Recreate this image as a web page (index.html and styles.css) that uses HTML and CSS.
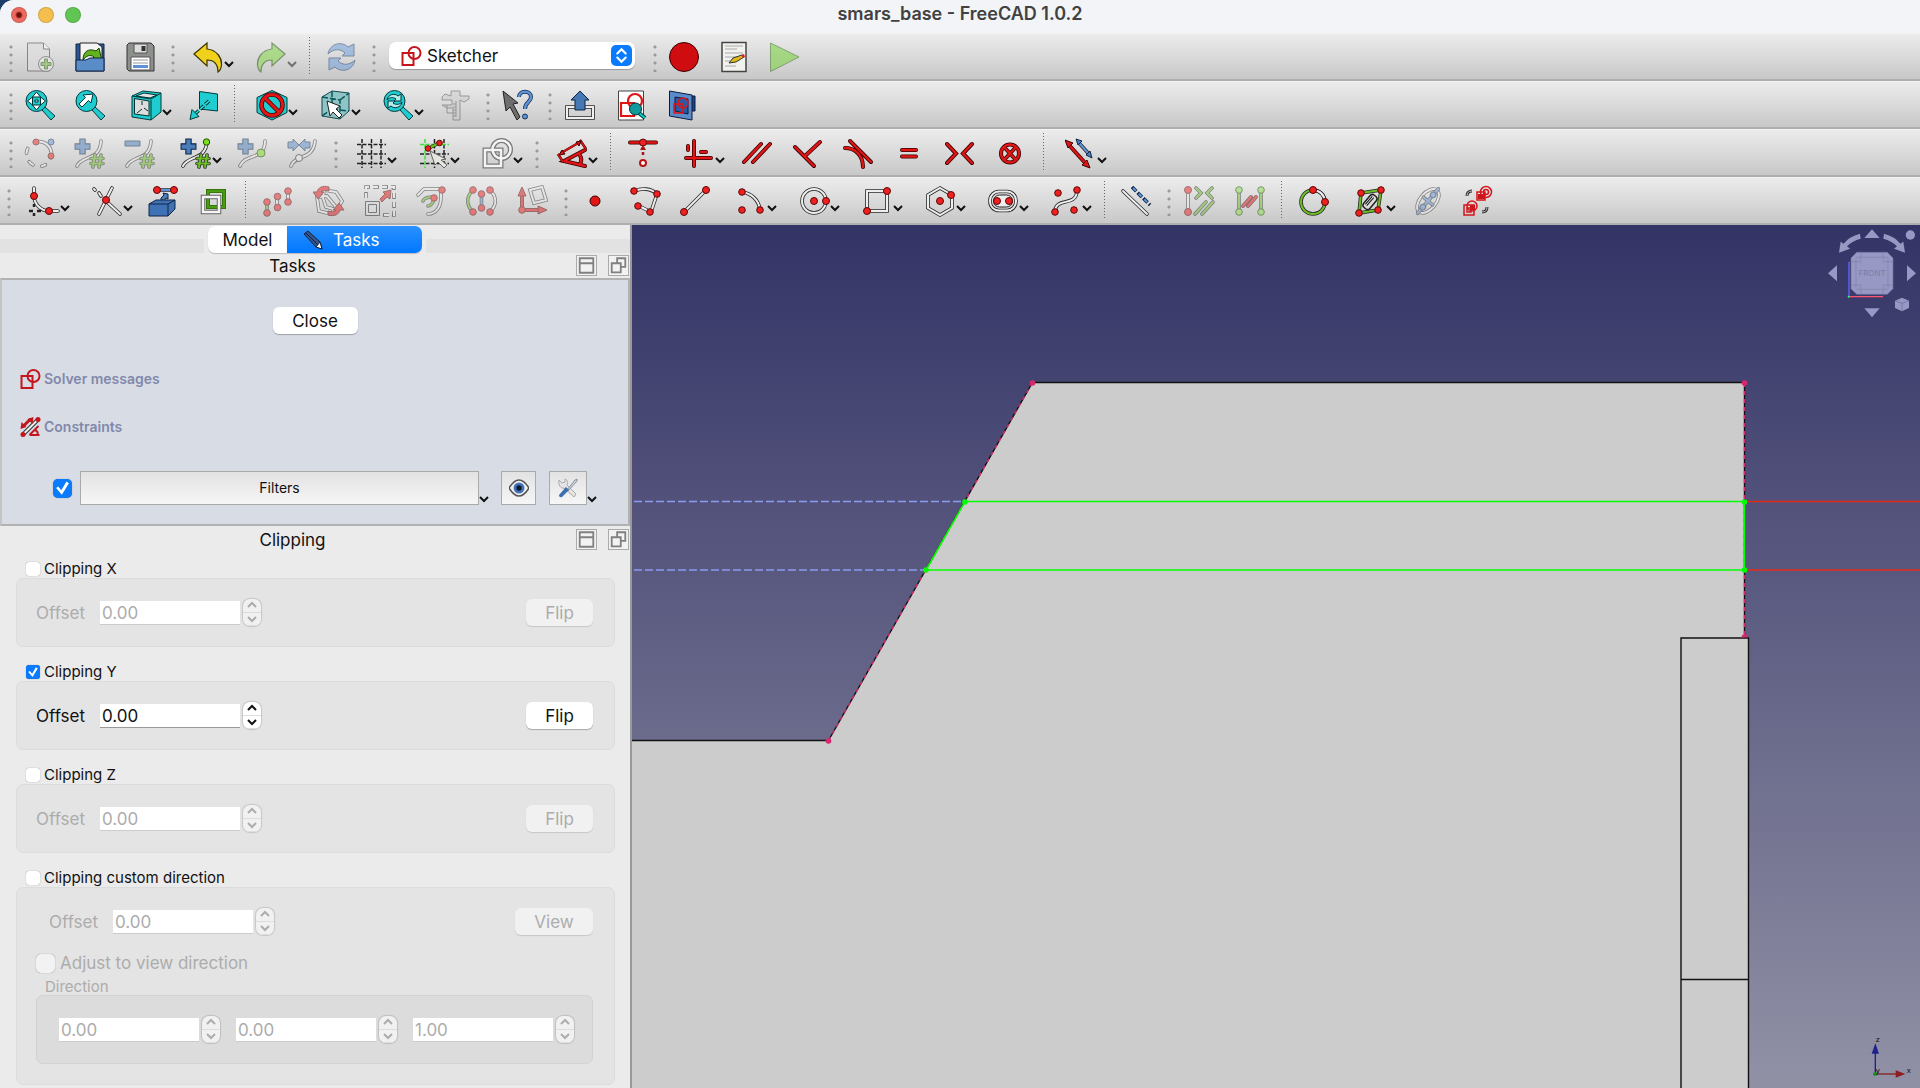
FILE: index.html
```html
<!DOCTYPE html>
<html lang="en">
<head>
<meta charset="utf-8">
<title>smars_base - FreeCAD 1.0.2</title>
<link rel="stylesheet" href="styles.css">
</head>
<body>
<svg class="sprite" aria-hidden="true">
  <symbol id="chev" viewBox="0 0 10 8"><path d="M1 2l4 4 4-4" fill="none" stroke="currentColor" stroke-width="2"/></symbol>
  <symbol id="up" viewBox="0 0 10 8"><path d="M1 6l4-4 4 4" fill="none" stroke="currentColor" stroke-width="2"/></symbol>
  <symbol id="shade" viewBox="0 0 21 21"><path d="M3 2.500h15v16H3zM3 8h15" fill="none" stroke="#808080" stroke-width="2"/></symbol>
  <symbol id="float" viewBox="0 0 21 21"><path d="M9 8V2.500h9V12h-5M3 8h10v10H3z" fill="none" stroke="#808080" stroke-width="2"/></symbol>
  <symbol id="sketch" viewBox="0 0 20 20"><path d="M1 7h11v12H1z" fill="none" stroke="#c4161c" stroke-width="2"/><circle cx="13" cy="7" r="6" fill="none" stroke="#c4161c" stroke-width="2"/></symbol>
  <symbol id="hash" viewBox="0 0 16 16"><path class="e" d="M6 2L4 14M12 2l-2 12M2 5.500h12M2 10.500h12"/><path class="g" d="M6 2L4 14M12 2l-2 12M2 5.500h12M2 10.500h12"/></symbol>
  <symbol id="plus" viewBox="0 0 16 16"><path d="M5.500 1h5v4.500H15v5h-4.500V15h-5v-4.500H1v-5h4.500z" fill="#4a7ebb" stroke="#0f2444"/></symbol>
  <linearGradient id="sky" x2="0" y2="1"><stop offset="0" stop-color="#333366"/><stop offset="1" stop-color="#9191a6"/></linearGradient>
</svg>

<div class="window">
<header class="titlebar">
  <div class="lights"><button class="light close" aria-label="Close window"></button><button class="light min" aria-label="Minimize"></button><button class="light zoom" aria-label="Zoom"></button></div>
  <h1>smars_base - FreeCAD 1.0.2</h1>
</header>

<div class="toolbar roomy">
  <i class="handle"></i>
  <button class="tool off" aria-label="New"><svg viewBox="0 0 32 32"><path d="M3.500 2h16l6 6v22h-22z" fill="#ddd" stroke="#333"/><path d="M19.500 2v6h6" fill="#fff" stroke="#333"/><circle cx="22" cy="23" r="7.500" fill="#eee" stroke="#444"/><path d="M20.500 18h3v3.500H27v3h-3.500V28h-3v-3.500H17v-3h3.500z" fill="#73b63a" stroke="#2a5a10"/></svg></button>
  <button class="tool" aria-label="Open"><svg viewBox="0 0 32 32"><path d="M2 3h28v27H2z" fill="#2a5590" stroke="#0f2444"/><path d="M6 2h17l5 4v14H6z" fill="#f4f4f4" stroke="#222"/><path d="M9 19C9 10 15 7 22 10l3-3 3 13H16l4-4c-4-3-8-1-11 3z" fill="#62b31d" stroke="#173f00"/><path d="M2 19h10l4-2h14v13H2z" fill="#5a8cc8" stroke="#0f2444"/></svg></button>
  <button class="tool" aria-label="Save"><svg viewBox="0 0 32 32"><path d="M5 2h22l3 3v25H5l-2-2V4z" fill="#8d918b" stroke="#333"/><path d="M10 3h13v9H10z" fill="#ddd" stroke="#555"/><path d="M17.500 5h4v5h-4z" fill="#333"/><path d="M7 16h19v13H7z" fill="#fff" stroke="#555"/><path d="M9 19h15M9 22h15" stroke="#999"/><path d="M9 24h15v3H9z" fill="#5e91d8"/></svg></button>
  <i class="handle"></i>
  <button class="tool menu" aria-label="Undo"><svg viewBox="0 0 32 32"><path d="M2 13L15 2v6c10 1 15 9 14.500 16-.4 4-2 6-3.500 7 0-8-4-12-11-12v6z" fill="#f0d21c" stroke="#3b3200" stroke-width="1.200"/></svg><svg class="chev"><use href="#chev"/></svg></button>
  <button class="tool menu off" aria-label="Redo"><svg viewBox="0 0 32 32"><path d="M30 13L17 2v6C7 9 2 17 2.500 24c.4 4 2 6 3.500 7 0-8 4-12 11-12v6z" fill="#7ed63a" stroke="#1f4d00" stroke-width="1.200"/></svg><svg class="chev"><use href="#chev"/></svg></button>
  <i class="sep"></i>
  <button class="tool off" aria-label="Refresh"><svg viewBox="0 0 32 32"><g fill="#6a9bdc" stroke="#1b3a63"><path d="M3 13C5 2 17 0 23 6l6-3v12H17l3-3C15 7 8 8 3 13z"/><path d="M30 19C28 30 16 32 10 26l-6 3V17h12l-3 3c5 5 12 4 17-1z"/></g></svg></button>
  <i class="handle"></i>
  <div class="combo"><svg><use href="#sketch"/></svg><select aria-label="Workbench"><option>Sketcher</option></select><span class="stepper"><svg viewBox="0 0 20 20"><path d="M6 8l4-4 4 4M6 12l4 4 4-4" fill="none" stroke="#fff" stroke-width="2" stroke-linecap="round"/></svg></span></div>
  <i class="handle"></i>
  <button class="tool" aria-label="Record macro"><svg viewBox="0 0 32 32"><circle cx="16" cy="16" r="14.500" fill="#cf0c0f" stroke="#3b0000"/></svg></button>
  <button class="tool" aria-label="Macros"><svg viewBox="0 0 32 32"><path d="M4 1.500h24v29H4z" fill="#f0f2ee" stroke="#444" stroke-width="1.500"/><path d="M7 5h18M7 8h12M7 12h18M7 16h14M7 20h8M7 25h11" stroke="#aaa"/><path d="M11 22l4-5 9-3 2 2-8 5z" fill="#e0b91c" stroke="#333"/><path d="M23 14l3-1 1 3-2 1z" fill="#d22"/></svg></button>
  <button class="tool off" aria-label="Run macro"><svg viewBox="0 0 32 32"><path d="M2.500 2L31 16 2.500 30.500z" fill="#6fd22c" stroke="#2d6a10"/></svg></button>
</div>

<div class="toolbar roomy">
  <i class="handle"></i>
  <button class="tool" aria-label="Fit all"><svg viewBox="0 0 32 32"><path d="M18 21l3-3 10 9-4 4z" class="cy"/><circle cx="12.500" cy="12" r="10.500" class="cy"/><path d="M11 11h3v2h-3zM12.500 3l4 5h-8zM12.500 21l4-5h-8zM3.500 12l5-4v8zM21.500 12l-5-4v8z" fill="#fff" stroke="#033"/></svg></button>
  <button class="tool" aria-label="Fit selection"><svg viewBox="0 0 32 32"><path d="M18 21l3-3 10 9-4 4z" class="cy"/><circle cx="12.500" cy="12" r="10.500" class="cy"/><path d="M19 5l-2 9-2.500-2.500L8 18l-3-3 6.500-6.500L9 6z" fill="#fff" stroke="#033"/></svg></button>
  <button class="tool menu" aria-label="Standard views"><svg viewBox="0 0 32 32"><path d="M2 7l11-5 18 2v19l-10 8-19-3z" class="cy"/><path d="M6 7l8-3 13 2-7 3z" fill="#e4e4e4" stroke="#033"/><path d="M4.500 9.500L19 12v15L4.500 25z" fill="#ddd" stroke="#033"/><path d="M21 11v20M2 7l19 3 10-6M12 12v4M12 20l-5 4M14 19l4 3" fill="none" stroke="#033"/></svg><svg class="chev"><use href="#chev"/></svg></button>
  <button class="tool" aria-label="Align to selection"><svg viewBox="0 0 32 32"><path d="M12.500 2.500l18 2.500v17l-18-2z" class="cy"/><path d="M22 12L8 25" stroke="#033" stroke-width="3.500" stroke-dasharray="5 2"/><path d="M22 12L8 25" stroke="#3dd" stroke-width="1.500" stroke-dasharray="5 2"/><path d="M3 30.500l2-10 7 7z" class="cy"/></svg></button>
  <i class="sep"></i>
  <button class="tool menu" aria-label="Draw style"><svg viewBox="0 0 32 32"><path d="M16 1.500l15 7v15l-15 7.500-15-7.500v-15z" class="cy"/><g fill="none"><circle cx="16" cy="16" r="10.500" stroke="#400" stroke-width="4.500"/><path d="M9 9l14 14" stroke="#400" stroke-width="4.500"/><circle cx="16" cy="16" r="10.500" stroke="#e01515" stroke-width="3"/><path d="M9 9l14 14" stroke="#e01515" stroke-width="3"/></g></svg><svg class="chev"><use href="#chev"/></svg></button>
  <button class="tool menu" aria-label="Bounding box"><svg viewBox="0 0 32 32"><path d="M3 8l10-6 17 2v18l-9 8-18-3z" fill="#8fc4c6" stroke="#144a4c"/><path d="M3 8l18 3v19M21 11l9-7M13 2v18L3 27M13 20l17 2" fill="none" stroke="#0a5558" stroke-width="1.500" stroke-dasharray="6 2"/><path d="M8 12l13 5-4 3 6 6-3 3-6-6-3 4z" fill="#fff" stroke="#222"/></svg><svg class="chev"><use href="#chev"/></svg></button>
  <button class="tool menu" aria-label="Zoom"><svg viewBox="0 0 32 32"><path d="M18 21l3-3 10 9-4 4z" class="cy"/><circle cx="12.500" cy="12" r="10.500" class="cy"/><path d="M5 11c1-6 8-7 11-4l3-2v7h-7l2-2c-3-2-6-2-9 1zM20 13c-1 6-8 7-11 4l-3 2v-7h7l-2 2c3 2 6 2 9-1z" fill="#b4ecec" stroke="#033"/></svg><svg class="chev"><use href="#chev"/></svg></button>
  <button class="tool off" aria-label="Measure"><svg viewBox="0 0 32 32"><path d="M12 2h9v5h9v3l-5 3-4-2v20h-7V19h-6l-5-3h10v-5H3V8l3-3 6 2z" fill="#ccc" stroke="#555"/><path d="M17 12v16M14 15h3M14 18h3M14 21h3M14 24h3M14 27h3M8 16v8h6" stroke="#555" fill="none"/></svg></button>
  <i class="handle"></i>
  <button class="tool" aria-label="What's this?"><svg viewBox="0 0 32 32"><path d="M2 2l15 12-5 1 7 13-3 3-7-13-4 4z" fill="#6e6e6e" stroke="#222"/><path d="M18 8c0-7 12-7 12 0 0 5-6 5-6 12" fill="none" stroke="#17304f" stroke-width="4"/><path d="M18 8c0-7 12-7 12 0 0 5-6 5-6 12" fill="none" stroke="#5d93d8" stroke-width="2.500"/><circle cx="24" cy="27.500" r="2.500" fill="#5d93d8" stroke="#17304f"/></svg></button>
  <i class="handle"></i>
  <div class="group">
  <button class="tool" aria-label="Leave sketch"><svg viewBox="0 0 32 32"><path class="e" d="M10 18H3v11h26V18h-7"/><path class="w" d="M10 18H3v11h26V18h-7"/><path d="M16 2l9 9h-4v10H11V11H7z" fill="#4678b4" stroke="#0f2444"/></svg></button>
  <button class="tool" aria-label="View sketch"><svg viewBox="0 0 32 32"><path d="M3.500 2h25v29h-25z" fill="#fff" stroke="#444"/><path d="M6 14h13v13H6z" fill="none" stroke="#e01515" stroke-width="2.200"/><circle cx="20" cy="12" r="7" fill="none" stroke="#e01515" stroke-width="2.200"/><path d="M24 24l6 5" stroke="#033" stroke-width="4"/><path d="M24 24l6 5" stroke="#1cc" stroke-width="2"/><circle cx="20.500" cy="20" r="6" fill="#119a9c" stroke="#033"/></svg></button>
  <button class="tool" aria-label="View section"><svg viewBox="0 0 32 32"><path d="M20 7h9v15h-9z" fill="#1e4585" stroke="#0a1c3c"/><path d="M3.500 2L26 6v25L3.500 27z" fill="#5a8ccc" stroke="#0a1c3c"/><path d="M9 8l13 2v15L9 22z" fill="#2a5aa4" stroke="#0a1c3c"/><path d="M8 15h9v9H8z" fill="none" stroke="#e01515" stroke-width="1.500"/><circle cx="17" cy="14" r="5" fill="none" stroke="#e01515" stroke-width="1.500"/></svg></button>
  </div>
</div>

<div class="toolbar roomy">
  <i class="handle"></i>
  <button class="tool off" aria-label="Select unconstrained"><svg viewBox="0 0 32 32"><circle class="e" cx="15" cy="17" r="12.500" stroke-dasharray="20 9 4 9 5 9 5 9 9 0" transform="rotate(-75 15 17)"/><circle class="w" cx="15" cy="17" r="12.500" stroke-dasharray="20 9 4 9 5 9 5 9 9 0" transform="rotate(-75 15 17)"/><circle class="dot" cx="12" cy="5" r="3"/><circle class="dot" cx="27" cy="19" r="3"/><circle cx="27" cy="5" r="3" fill="#5d93d8" stroke="#17304f"/></svg></button>
  <button class="tool off" aria-label="Increase B-spline degree"><svg viewBox="0 0 32 32"><path class="e" d="M3 29C8 18 26 24 27 4"/><path class="w" d="M3 29C8 18 26 24 27 4"/><use href="#plus" width="17" height="17" y="1"/><use href="#hash" x="15" y="16" width="16" height="16"/></svg></button>
  <button class="tool off" aria-label="Decrease B-spline degree"><svg viewBox="0 0 32 32"><path class="e" d="M3 29C8 18 26 24 27 4"/><path class="w" d="M3 29C8 18 26 24 27 4"/><path d="M1 4h15v5H1z" fill="#4a7ebb" stroke="#0f2444"/><use href="#hash" x="15" y="16" width="16" height="16"/></svg></button>
  <button class="tool menu" aria-label="Knot multiplicity"><svg viewBox="0 0 32 32"><path class="e" d="M3 29C8 18 26 24 27 4"/><path class="w" d="M3 29C8 18 26 24 27 4"/><use href="#plus" width="17" height="17" y="1"/><use href="#hash" x="15" y="16" width="16" height="16"/><circle cx="26.500" cy="5" r="3.200" fill="#7be01c" stroke="#1d4a00"/></svg><svg class="chev"><use href="#chev"/></svg></button>
  <button class="tool off" aria-label="Insert knot"><svg viewBox="0 0 32 32"><path class="e" d="M3 29C8 16 28 24 28 4"/><path class="w" d="M3 29C8 16 28 24 28 4"/><use href="#plus" width="17" height="17" y="1"/><circle cx="24" cy="16" r="4" fill="#7be01c" stroke="#1d4a00"/></svg></button>
  <button class="tool off" aria-label="Join curves"><svg viewBox="0 0 32 32"><path class="e" d="M4 29C8 17 26 24 28 4"/><path class="w" d="M4 29C8 17 26 24 28 4"/><path d="M1 5h5V2l6 6-6 6v-3H1zM23 5h-5V2l-6 6 6 6v-3h5z" fill="#5b8cc9" stroke="#17304f"/><circle cx="12" cy="21" r="3.500" fill="#eee" stroke="#222"/></svg></button>
  <i class="handle"></i>
  <button class="tool menu" aria-label="Grid"><svg viewBox="0 0 32 32"><path d="M7 2v29M16.500 2v29M26 2v29M2 7.500h29M2 17h29M2 26.500h29" fill="none" stroke="#222" stroke-width="1.500" stroke-dasharray="4 1.500"/></svg><svg class="chev"><use href="#chev"/></svg></button>
  <button class="tool menu" aria-label="Snap"><svg viewBox="0 0 32 32"><path d="M16.500 2v29M26 2v29M2 17h29M2 26.500h29" stroke="#222" stroke-width="1.500" stroke-dasharray="4 1.500"/><path d="M7 2v29M2 7.500h29" stroke="#3de03d" stroke-width="1.500" stroke-dasharray="4 1.500"/><path class="e" d="M11 11l10-5"/><path class="g" d="M11 11l10-5"/><circle class="dot" cx="10" cy="11.500" r="2.800"/><circle class="dot" cx="21.500" cy="6" r="2.800"/><path d="M12 14l16 8-5 1 6 5-3 3-6-6-3 3z" fill="#e6e6e0" stroke="#666"/></svg><svg class="chev"><use href="#chev"/></svg></button>
  <button class="tool menu" aria-label="Rendering order"><svg viewBox="0 0 32 32"><g fill="none" stroke="#7a7a7a" stroke-width="5"><path d="M4 13h16v16H4z"/><circle cx="20.500" cy="12.500" r="9"/></g><g fill="none" stroke="#f4f4f4" stroke-width="2.500"><path d="M4 13h16v16H4z"/><circle cx="20.500" cy="12.500" r="9"/></g></svg><svg class="chev"><use href="#chev"/></svg></button>
  <i class="handle"></i>
  <button class="tool menu" aria-label="Dimension"><svg viewBox="0 0 32 32"><path class="er" d="M29 13L8 24l21 5M23 17q4 5 1 10"/><path class="r" d="M29 13L8 24l21 5M23 17q4 5 1 10"/><path d="M2 17l5 8M24 3l6 9M5 16l19-11" fill="none" stroke="#3b0000" stroke-width="2.500"/><path d="M2 17l5 8M24 3l6 9M5 16l19-11" fill="none" stroke="#e01515" stroke-width="1.500"/><path d="M3 18l3-5 3 4zM25 4l-5 1 3 4z" fill="#e01515" stroke="#3b0000"/></svg><svg class="chev"><use href="#chev"/></svg></button>
  <i class="sep"></i>
  <div class="group">
  <button class="tool" aria-label="Coincident"><svg viewBox="0 0 32 32"><path class="er" d="M3 5.500h26"/><path class="r" d="M3 5.500h26"/><path d="M16 10v10" stroke="#a11" stroke-width="2.500" stroke-dasharray="3 2"/><circle class="dot" cx="16" cy="5.500" r="3.500"/><path d="M16 8l3 5h-6z" fill="#a11"/><circle cx="16" cy="26" r="3" fill="#fff" stroke="#b11" stroke-width="2"/></svg></button>
  <button class="tool menu" aria-label="Horizontal/vertical"><svg viewBox="0 0 32 32"><path class="er" d="M11 4v25M3 21h25M5 9v4M18 15h5"/><path class="r" d="M11 4v25M3 21h25M5 9v4M18 15h5"/></svg><svg class="chev"><use href="#chev"/></svg></button>
  <button class="tool" aria-label="Parallel"><svg viewBox="0 0 32 32"><path class="er" d="M3 25L20 7M12 25L29 7"/><path class="r" d="M3 25L20 7M12 25L29 7"/></svg></button>
  <button class="tool" aria-label="Perpendicular"><svg viewBox="0 0 32 32"><path class="er" d="M3 10l19 19M13 19L28 5"/><path class="r" d="M3 10l19 19M13 19L28 5"/></svg></button>
  <button class="tool" aria-label="Tangent"><svg viewBox="0 0 32 32"><path class="er" d="M7 4l21 21M2 11C12 11 20 18 20 30"/><path class="r" d="M7 4l21 21M2 11C12 11 20 18 20 30"/></svg></button>
  <button class="tool" aria-label="Equal"><svg viewBox="0 0 32 32"><path class="er" d="M8 13h14M8 19.500h14"/><path class="r" d="M8 13h14M8 19.500h14"/></svg></button>
  <button class="tool" aria-label="Symmetric"><svg viewBox="0 0 32 32"><path class="er" d="M2 7l9 9.500L2 26M27 7l-9 9.500 9 9.500"/><path class="r" d="M2 7l9 9.500L2 26M27 7l-9 9.500 9 9.500"/></svg></button>
  <button class="tool" aria-label="Block"><svg viewBox="0 0 32 32"><circle class="er" cx="14" cy="16.500" r="9"/><path class="er" d="M9 11l10 11M19 11L9 22"/><circle class="r" cx="14" cy="16.500" r="9"/><path class="r" d="M9 11l10 11M19 11L9 22"/></svg></button>
  </div>
  <i class="sep"></i>
  <button class="tool menu" aria-label="Toggle driving"><svg viewBox="0 0 32 32"><path class="er" d="M4 8l18 20"/><path class="r" d="M4 8l18 20"/><path d="M0 3l8 3-5 5zM25 31l-8-3 5-5z" fill="#e01515" stroke="#3b0000"/><path class="e" d="M14 6l10 11"/><path class="b" d="M14 6l10 11"/><path d="M11 2l6 2-4 4zM27 21l-6-3 4-4z" fill="#4a7ebb" stroke="#0f2444"/></svg><svg class="chev"><use href="#chev"/></svg></button>
</div>

<div class="toolbar">
  <i class="handle"></i>
  <button class="tool menu" aria-label="Fillet"><svg viewBox="0 0 32 32"><path class="e" d="M6 3v8c0 8 7 15 15 15h9"/><path class="w" d="M6 3v8c0 8 7 15 15 15h9"/><path d="M6 19v3M6 28v3M1 26h4M9 26h4" stroke="#222" stroke-width="2.500"/><circle class="dot" cx="6" cy="11" r="3.500"/><circle class="dot" cx="21" cy="26" r="3.500"/></svg><svg class="chev"><use href="#chev"/></svg></button>
  <button class="tool menu" aria-label="Trim"><svg viewBox="0 0 32 32"><path class="e" d="M21 3L8 29M15 16l14 13M3 4l1 1M8 8l2 3"/><path class="w" d="M21 3L8 29M15 16l14 13M3 4l1 1M8 8l2 3"/><circle class="dot" cx="15" cy="15" r="3.500"/></svg><svg class="chev"><use href="#chev"/></svg></button>
  <button class="tool" aria-label="External geometry"><svg viewBox="0 0 32 32"><path class="e" d="M9 5h17"/><path class="b" d="M9 5h17"/><circle class="dot" cx="9" cy="5" r="3.500"/><circle class="dot" cx="26" cy="5" r="3.500"/><path d="M13 16v-3l3-3-1-2 5 1v5l-2-1-2 3z" fill="#4a7ebb" stroke="#0f2444"/><path d="M1 19l7-4h19v9l-7 7H1z" fill="#3f72b4" stroke="#0f2444"/><path d="M1 19h19l7-4M20 19v12" fill="none" stroke="#0f2444"/></svg></button>
  <button class="tool" aria-label="Carbon copy"><svg viewBox="0 0 32 32"><path d="M10 6h16v16H10z" fill="none" stroke="#2f6a0a" stroke-width="4"/><path d="M10 6h16v16H10z" fill="none" stroke="#4a9a12" stroke-width="2.500"/><path d="M5 12h16v15H5z" fill="none" stroke="#666" stroke-width="4.500"/><path d="M5 12h16v15H5z" fill="none" stroke="#f4f4f4" stroke-width="2.500"/></svg></button>
  <i class="sep"></i>
  <div class="group">
  <button class="tool off" aria-label="Array"><svg viewBox="0 0 32 32"><path class="e" d="M5 17v11"/><path class="g" d="M5 17v11"/><path class="e" d="M15 12v11M26 6v11"/><path class="w" d="M15 12v11M26 6v11"/><g class="dot"><circle cx="5" cy="17" r="3.300"/><circle cx="5" cy="28" r="3.300"/><circle cx="15.500" cy="11.500" r="3.300"/><circle cx="15.500" cy="22.500" r="3.300"/><circle cx="26" cy="6" r="3.300"/><circle cx="26" cy="17" r="3.300"/></g></svg></button>
  <button class="tool off" aria-label="Rotate"><svg viewBox="0 0 32 32"><path class="e" d="M4 12l2 14 12 3 5-7-9-11zM11 5l12 2 6 9-5 9-11-3-3-9z"/><path class="w" d="M4 12l2 14 12 3 5-7-9-11zM11 5l12 2 6 9-5 9-11-3-3-9z"/><path d="M16 2C9 0 5 3 4 7L0 7l5 7 6-7H8c2-2 5-2 8-1zM15 30c7 2 11-1 12-5h4l-5-7-6 7h3c-2 2-5 2-8 1z" fill="#e01515" stroke="#5b0000"/></svg></button>
  <button class="tool off" aria-label="Scale"><svg viewBox="0 0 32 32"><path d="M2 13V2h28v28H18" fill="none" stroke="#222" stroke-width="3.500" stroke-dasharray="6 3"/><path d="M2 13V2h28v28H18" fill="none" stroke="#eee" stroke-width="2" stroke-dasharray="5 4"/><path d="M1.500 16.500h14v14h-14zM4.500 19.500h8v8h-8z" fill="#ddd" stroke="#222"/><path d="M16 14l5-5-2-2 8-2-1 9-3-2-5 5z" fill="#e01515" stroke="#5b0000"/></svg></button>
  <button class="tool off" aria-label="Offset"><svg viewBox="0 0 32 32"><path class="e" d="M3 10l6-6h17v8c0 10-5 17-13 17"/><path class="w" d="M3 10l6-6h17v8c0 10-5 17-13 17"/><path class="e" d="M19 13c0 5-4 8-6 8M18 12c-4 0-9 1-10 4"/><path class="g" d="M19 13c0 5-4 8-6 8M18 12c-4 0-9 1-10 4"/><circle class="dot" cx="27" cy="5" r="3.300"/><circle class="dot" cx="19" cy="13" r="3.300"/></svg></button>
  <button class="tool off" aria-label="Symmetry"><svg viewBox="0 0 32 32"><path class="e" d="M7 5C0 12 0 20 7 27"/><path class="g" d="M7 5C0 12 0 20 7 27"/><path class="e" d="M24 5c7 7 7 15 0 22"/><path class="w" d="M24 5c7 7 7 15 0 22"/><path class="e" d="M15.500 9v14"/><path class="b" d="M15.500 9v14"/><g class="dot"><circle cx="7" cy="5" r="3.300"/><circle cx="7" cy="27" r="3.300"/><circle cx="15.500" cy="9" r="3.300"/><circle cx="15.500" cy="23" r="3.300"/><circle cx="24" cy="5" r="3.300"/><circle cx="24" cy="27" r="3.300"/></g></svg></button>
  <button class="tool off" aria-label="Remove axes alignment"><svg viewBox="0 0 32 32"><path class="er" d="M5 25V9M5 25h17"/><path class="r" d="M5 25V9M5 25h17"/><path d="M5 2l4 9H1zM30 25l-9 4v-8z" fill="#e01515" stroke="#5b0000"/><path class="e" d="M13 5l12-3 4 13-12 3z"/><path class="w" d="M13 5l12-3 4 13-12 3z"/><circle class="dot" cx="5" cy="25" r="3.300"/></svg></button>
  </div>
  <i class="handle"></i>
  <button class="tool" aria-label="Point"><svg viewBox="0 0 32 32"><circle cx="16" cy="16" r="5" fill="#e01515" stroke="#3b0000"/></svg></button>
  <button class="tool" aria-label="Polyline"><svg viewBox="0 0 32 32"><path class="e" d="M6 6c6-3 16-3 22 3l-6 18-12-6"/><path class="w" d="M6 6c6-3 16-3 22 3l-6 18-12-6"/><g class="dot"><circle cx="5" cy="6" r="3.300"/><circle cx="28" cy="9" r="3.300"/><circle cx="21" cy="27" r="3.300"/><circle cx="9" cy="21" r="3.300"/></g></svg></button>
  <button class="tool" aria-label="Line"><svg viewBox="0 0 32 32"><path class="e" d="M5 27L27 5"/><path class="w" d="M5 27L27 5"/><circle class="dot" cx="5" cy="27" r="3.500"/><circle class="dot" cx="27" cy="5" r="3.500"/></svg></button>
  <button class="tool menu" aria-label="Arc"><svg viewBox="0 0 32 32"><path class="e" d="M7 7c9 1 17 8 18 18"/><path class="w" d="M7 7c9 1 17 8 18 18"/><g class="dot"><circle cx="7" cy="7" r="3.300"/><circle cx="25" cy="25" r="3.300"/><circle cx="7" cy="25" r="3.300"/></g></svg><svg class="chev"><use href="#chev"/></svg></button>
  <button class="tool menu" aria-label="Circle"><svg viewBox="0 0 32 32"><circle class="e" cx="16" cy="16" r="12"/><circle class="w" cx="16" cy="16" r="12"/><circle class="dot" cx="16" cy="16" r="3.500"/><circle class="dot" cx="28" cy="16" r="3.500"/></svg><svg class="chev"><use href="#chev"/></svg></button>
  <button class="tool menu" aria-label="Rectangle"><svg viewBox="0 0 32 32"><path class="e" d="M6 6h20v20H6z"/><path class="w" d="M6 6h20v20H6z"/><circle class="dot" cx="6" cy="26" r="3.500"/><circle class="dot" cx="26" cy="6" r="3.500"/></svg><svg class="chev"><use href="#chev"/></svg></button>
  <button class="tool menu" aria-label="Polygon"><svg viewBox="0 0 32 32"><path class="e" d="M16 3l12 7v13l-12 7-12-7V10z"/><path class="w" d="M16 3l12 7v13l-12 7-12-7V10z"/><circle class="dot" cx="16" cy="16" r="3.500"/><circle class="dot" cx="27" cy="10" r="3.500"/></svg><svg class="chev"><use href="#chev"/></svg></button>
  <button class="tool menu" aria-label="Slot"><svg viewBox="0 0 32 32"><rect class="e" x="3" y="6.500" width="26" height="19" rx="9"/><rect class="w" x="3" y="6.500" width="26" height="19" rx="9"/><rect x="6.500" y="10" width="19" height="12" rx="6" fill="#eee" stroke="#222"/><circle class="dot" cx="10" cy="16" r="3.500"/><circle class="dot" cx="22" cy="16" r="3.500"/></svg><svg class="chev"><use href="#chev"/></svg></button>
  <button class="tool menu" aria-label="B-spline"><svg viewBox="0 0 32 32"><path class="e" d="M5 27c0-16 22-4 22-22"/><path class="w" d="M5 27c0-16 22-4 22-22"/><g class="dot"><circle cx="5" cy="27" r="3.300"/><circle cx="27" cy="5" r="3.300"/><circle cx="8" cy="8" r="3.300"/><circle cx="24" cy="25" r="3.300"/></g></svg><svg class="chev"><use href="#chev"/></svg></button>
  <i class="sep"></i>
  <button class="tool" aria-label="Toggle construction"><svg viewBox="0 0 32 32"><path class="e" d="M3 6l24 23"/><path class="w" d="M3 6l24 23"/><path d="M12 2l18 18" stroke="#0f2444" stroke-width="3.500" stroke-dasharray="6 2"/><path d="M13 3l17 17" stroke="#5d93d8" stroke-width="2" stroke-dasharray="4 4"/></svg></button>
  <i class="handle"></i>
  <div class="group">
  <button class="tool off" aria-label="Select constraints"><svg viewBox="0 0 32 32"><path class="e" d="M5 5v22"/><path class="w" d="M5 5v22"/><circle class="dot" cx="5" cy="5" r="3.500"/><circle class="dot" cx="5" cy="27" r="3.500"/><path class="e" d="M13 3l5 5-5 5M29 3l-5 5 5 5M12 29l11-12M19 29l11-12"/><path class="g" d="M13 3l5 5-5 5M29 3l-5 5 5 5M12 29l11-12M19 29l11-12"/></svg></button>
  <button class="tool off" aria-label="Select elements"><svg viewBox="0 0 32 32"><path class="e" d="M5 5v22M27 5v22"/><path class="g" d="M5 5v22M27 5v22"/><path class="er" d="M9 21l8-9M14 21l8-9"/><path class="r" d="M9 21l8-9M14 21l8-9"/><g fill="#8be04a" stroke="#1d4a00"><circle cx="5" cy="5" r="3.300"/><circle cx="5" cy="27" r="3.300"/><circle cx="27" cy="5" r="3.300"/><circle cx="27" cy="27" r="3.300"/></g></svg></button>
  <i class="sep"></i>
  <button class="tool" aria-label="Arc overlay"><svg viewBox="0 0 32 32"><circle class="e" cx="15" cy="17" r="12"/><circle class="g" cx="15" cy="17" r="12"/><path class="e" d="M15 5q11 1 12 12"/><path class="w" d="M15 5q11 1 12 12"/><circle class="dot" cx="15" cy="5" r="3.500"/><circle class="dot" cx="27" cy="17" r="3.500"/></svg></button>
  <button class="tool menu" aria-label="Internal geometry"><svg viewBox="0 0 32 32"><path class="e" d="M7 8l20-3-3 20-19 3z"/><path class="g" d="M7 8l20-3-3 20-19 3z"/><rect x="8" y="13" width="16" height="8" rx="3" fill="#ddd" stroke="#222" stroke-width="1.500" transform="rotate(-50 16 17)"/><path d="M12 20l7-8" stroke="#222" stroke-width="3"/><path d="M12 20l7-8" stroke="#eee"/><g class="dot"><circle cx="7" cy="8" r="3.300"/><circle cx="27" cy="5" r="3.300"/><circle cx="24" cy="25" r="3.300"/><circle cx="5" cy="28" r="3.300"/></g></svg><svg class="chev"><use href="#chev"/></svg></button>
  <button class="tool off" aria-label="B-spline internals"><svg viewBox="0 0 32 32"><g transform="rotate(-50 16 16)"><ellipse class="e" cx="16" cy="16" rx="14" ry="8"/><ellipse class="w" cx="16" cy="16" rx="14" ry="8"/><path class="e" d="M0 16h32M16 10v12"/><path class="b" d="M0 16h32M16 10v12"/><g fill="#5d93d8" stroke="#17304f"><circle cx="8" cy="16" r="2.800"/><circle cx="24" cy="16" r="2.800"/></g></g></svg></button>
  <button class="tool" aria-label="Switch virtual space"><svg viewBox="0 0 32 32"><path d="M15 9h7v5h-7zM7 20h5v5H7z" fill="#c4161c"/><g fill="none" stroke="#d4161c" stroke-width="1.500"><path d="M14 7h8v8h-8zM1 20h10v10H1zM4 23h4v4H4z"/><circle cx="23" cy="7" r="5.500"/><circle cx="23" cy="7" r="2.500"/><circle cx="9" cy="21" r="5"/></g><path d="M4 11q0-5 5-5M19 27q5 0 5-5" fill="none" stroke="#333" stroke-width="3"/><path d="M4 11q0-5 5-5M19 27q5 0 5-5" fill="none" stroke="#bbb"/></svg></button>
  </div>
</div>

<main>
<aside>
  <nav class="tabs"><button>Model</button><button class="on"><svg viewBox="0 0 20 20"><path d="M1 4l4-3 12 11 2 7-6-2z" fill="#35568c" stroke="#10203c"/><path d="M3 3l12 12" stroke="#10203c"/><path d="M13 17l4-5 2 7z" fill="#fff" stroke="#10203c"/></svg>Tasks</button></nav>
  <div class="dock"><h2>Tasks</h2><button aria-label="Collapse tasks"><svg><use href="#shade"/></svg></button><button aria-label="Float tasks"><svg><use href="#float"/></svg></button></div>
  <section class="tasks">
    <button class="push">Close</button>
    <a href="#solver" class="first"><svg><use href="#sketch"/></svg>Solver messages</a>
    <a href="#constraints"><svg viewBox="0 0 20 20"><path d="M2 18L18 2" stroke="#333" stroke-width="4"/><path d="M2 18L18 2" stroke="#eee" stroke-width="2"/><path d="M3 9l7-7" stroke="#c4161c" stroke-width="3"/><path d="M0 12l1-7 5 5zM13 0l-1 7-5-5z" fill="#c4161c"/><path d="M9 18h10M9 18l9-9M14 13q4 1 3 5" fill="none" stroke="#c4161c" stroke-width="2"/><circle cx="2.500" cy="17.500" r="2.500" fill="#c4161c"/><circle cx="17.500" cy="2.500" r="2.500" fill="#c4161c"/></svg>Constraints</a>
    <div class="filters">
      <input type="checkbox" class="check big" aria-label="Enable filters" checked>
      <button class="flat wide">Filters</button><svg class="chev"><use href="#chev"/></svg>
      <button class="flat eye" aria-label="Visibility"><svg viewBox="0 0 20 20"><path d="M0 10q10-16 20 0-10 16-20 0z" fill="#f2f2f2" stroke="#555" stroke-width="1.500"/><circle cx="10" cy="10" r="5.500" fill="#3f74b8"/><circle cx="10" cy="10" r="2.700" fill="#10182c"/></svg></button>
      <button class="flat" aria-label="Settings"><svg viewBox="0 0 20 20"><path d="M1 2l3 3 3-1V1c3 1 3 4 2 6l9 9-2 3-10-9C3 11 0 7 1 2z" fill="#e4e4e4" stroke="#aaa"/><path d="M9 12l8-10 2-1v2l-9 10z" fill="#ccd4dd" stroke="#8a93a0"/><path d="M1 17l7-8 3 3-7 7q-3 1-3-2z" fill="#3c6fb0"/></svg></button><svg class="chev"><use href="#chev"/></svg>
    </div>
  </section>
  <div class="dock tall"><h2>Clipping</h2><button aria-label="Collapse clipping"><svg><use href="#shade"/></svg></button><button aria-label="Float clipping"><svg><use href="#float"/></svg></button></div>
  <section class="clipping">
    <div class="clip">
      <label class="cap"><input type="checkbox" class="check">Clipping X</label>
      <div class="box disabled"><div class="row"><label for="ox">Offset</label><span class="spin"><input id="ox" value="0.00" disabled><span><button disabled aria-label="Increase"><svg><use href="#up"/></svg></button><button disabled aria-label="Decrease"><svg><use href="#chev"/></svg></button></span></span><button class="push" disabled>Flip</button></div></div>
    </div>
    <div class="clip">
      <label class="cap"><input type="checkbox" class="check" checked>Clipping Y</label>
      <div class="box"><div class="row"><label for="oy">Offset</label><span class="spin"><input id="oy" value="0.00"><span><button aria-label="Increase"><svg><use href="#up"/></svg></button><button aria-label="Decrease"><svg><use href="#chev"/></svg></button></span></span><button class="push">Flip</button></div></div>
    </div>
    <div class="clip">
      <label class="cap"><input type="checkbox" class="check">Clipping Z</label>
      <div class="box disabled"><div class="row"><label for="oz">Offset</label><span class="spin"><input id="oz" value="0.00" disabled><span><button disabled aria-label="Increase"><svg><use href="#up"/></svg></button><button disabled aria-label="Decrease"><svg><use href="#chev"/></svg></button></span></span><button class="push" disabled>Flip</button></div></div>
    </div>
    <div class="clip">
      <label class="cap"><input type="checkbox" class="check">Clipping custom direction</label>
      <div class="box disabled custom"><div class="row"><label for="oc">Offset</label><span class="spin"><input id="oc" value="0.00" disabled><span><button disabled aria-label="Increase"><svg><use href="#up"/></svg></button><button disabled aria-label="Decrease"><svg><use href="#chev"/></svg></button></span></span><button class="push" disabled>View</button></div>
        <label class="adjust"><input type="checkbox" class="check big" disabled>Adjust to view direction</label>
        <div class="dir">Direction</div>
        <div class="inner">
          <span class="spin"><input aria-label="Direction X" value="0.00" disabled><span><button disabled aria-label="Increase"><svg><use href="#up"/></svg></button><button disabled aria-label="Decrease"><svg><use href="#chev"/></svg></button></span></span>
          <span class="spin"><input aria-label="Direction Y" value="0.00" disabled><span><button disabled aria-label="Increase"><svg><use href="#up"/></svg></button><button disabled aria-label="Decrease"><svg><use href="#chev"/></svg></button></span></span>
          <span class="spin"><input aria-label="Direction Z" value="1.00" disabled><span><button disabled aria-label="Increase"><svg><use href="#up"/></svg></button><button disabled aria-label="Decrease"><svg><use href="#chev"/></svg></button></span></span>
        </div>
      </div>
    </div>
  </section>
</aside>

<svg class="view" viewBox="0 0 1288 863" preserveAspectRatio="xMaxYMin slice" role="img" aria-label="3D view">
  <rect width="1288" height="863" fill="url(#sky)"/>
  <path d="M0 515.500h196.500L400.500 157.500h712V413h4.500v450H0z" fill="#ccc"/>
  <g fill="none" stroke="#111" stroke-width="1.400">
    <path d="M0 515.500h196.500M400.500 157.500h712"/>
    <path d="M1049 863V413h67.500V863M1049 754.500h67.500"/>
    <path d="M196.500 515.500l204-358M1112.500 158v255"/>
  </g>
  <path d="M196.500 515.500l204-358M1112.500 158v255" fill="none" stroke="#d6286e" stroke-width="1.400" stroke-dasharray="4 4"/>
  <path d="M2 276.500h331M2 345h292" stroke="#8a9cf0" stroke-width="1.400" stroke-dasharray="8 3"/>
  <path d="M1112 276.500h176M1112 345h176" stroke="#e62a18" stroke-width="1.600"/>
  <path d="M333 276.500h779.500V345H294z" fill="none" stroke="#0f0" stroke-width="1.600"/>
  <g fill="#0f0"><circle cx="333" cy="277" r="2.800"/><circle cx="294" cy="345" r="2.800"/><circle cx="1112.500" cy="277" r="2.800"/><circle cx="1112.500" cy="345" r="2.800"/></g>
  <g fill="#d6286e"><circle cx="400.500" cy="158" r="2.800"/><circle cx="1112.500" cy="158" r="2.800"/><circle cx="196.500" cy="516" r="2.800"/><path d="M1109.500 412.500a3 3 0 0 1 6 0z"/></g>
  <g transform="translate(1168 -5) scale(.33333)" fill="#9898c4">
    <path d="M170 97h92l17 17v92l-17 17h-92l-17-17v-92z" stroke="#7272a0" stroke-width="2"/>
    <path d="M147 125v105" stroke="#6464ff" stroke-width="4"/><path d="M147 230h102" stroke="#ff5470" stroke-width="4"/><circle cx="146" cy="230" r="3" fill="#3f6"/>
    <path d="M153 125h28l3-28M279 125h-28l-3-28M153 195h28l3 28M279 195h-28l-3 28M170 112h92M170 208h92M168 114v92M264 114v92" fill="none" stroke="#8080ac" stroke-width="2"/>
    <text x="216" y="169" class="front">FRONT</text>
    <path d="M216 28l23 26h-46zM216 292l23-27h-46zM84 160l27-24v48zM348 160l-27-24v48z"/>
    <path d="M180 41q-32 8-49 30l-9-6-5 33 33-12-9-7q16-17 41-23zM252 41q32 8 49 30l9-6 5 33-33-12 9-7q-16-17-41-23z"/>
    <circle cx="331" cy="45" r="14"/>
    <path d="M306 233l21 9v22l-21 10-21-10v-22z"/><path d="M285 242l21 8 21-8M306 250v24" fill="none" stroke="#6a6a98" stroke-width="2"/>
  </g>
  <g transform="translate(1208 795) scale(.33333)">
    <path d="M106 162V98" stroke="#20208c" stroke-width="4"/><path d="M106 70l11 31H95z" fill="#20208c"/>
    <path d="M106 162h62" stroke="#8c2020" stroke-width="4"/><path d="M196 162l-29 11v-22z" fill="#8c2020"/>
    <circle cx="105" cy="162" r="6" fill="#1c8c2c"/>
    <text x="107" y="67" class="axis">z</text><text x="107" y="158" class="axis">y</text><text x="200" y="158" class="axis">x</text>
  </g>
</svg>
</main>
</div>
</body>
</html>
```
FILE: styles.css
```css
* { box-sizing: border-box; }
body { margin: 0; background: #1c3d66; font: 17px/20px Inter, "Liberation Sans", sans-serif; color: #111; }
button, input, select { font: inherit; color: inherit; margin: 0; padding: 0; border: 0; background: none; }
h1, h2 { margin: 0; font-size: 17px; }
.sprite { position: absolute; width: 0; height: 0; }
.window { min-height: 100vh; display: flex; flex-direction: column; background: #ebebeb; border-radius: 14px 0 0 0; overflow: hidden; }

.titlebar { display: grid; grid-template-columns: 1fr auto 1fr; height: 33px; background: #f2f4f7; }
.titlebar h1 { font-size: 18px; font-weight: 600; line-height: 28px; color: #414141; }
.lights { display: flex; gap: 11px; padding: 7px 11px; }
.light { width: 16px; height: 16px; border-radius: 50%; border: 1px solid #0002; }
.light.close { background: radial-gradient(circle, #70100b 2px, #ed6a5e 4px); }
.light.min { background: #f5bf4f; }
.light.zoom { background: #61c554; }

.toolbar { display: flex; align-items: stretch; height: 48px; padding-left: 1px; background: linear-gradient(#ececec, #c8c8c8); border-bottom: 2px solid #aeaeae; border-top: 1px solid #f2f2f2; }
.toolbar.roomy { padding-left: 3px; }
.group { display: flex; }
.tool { display: flex; align-items: center; justify-content: center; width: 50px; flex: none; }
.group .tool { width: 51px; }
.tool svg { width: 32px; height: 32px; flex: none; }
.tool.menu, .group .tool.menu { width: 63px; justify-content: flex-start; padding-left: 15px; }
.tool .chev, .filters .chev { width: 10px; height: 8px; flex: none; }
.tool .chev { margin-top: 14px; color: #111; }
.tool.off > svg { opacity: .5; }
.handle { flex: none; width: 12px; height: 29px; margin-top: 9px; background: radial-gradient(circle at 8px 4px, #999 1px, transparent 2px) 0 0 / 12px 8px; }
.sep { flex: none; width: 13px; margin: 3px 0; background: linear-gradient(#666 1px, transparent 1px) 6px 0 / 1px 3px repeat-y; }

.e, .w, .g, .b, .r, .er { fill: none; stroke-linecap: round; }
.e { stroke: #2a2a2a; stroke-width: 3.6; }
.er { stroke: #3b0000; stroke-width: 4; }
.w { stroke: #eee; stroke-width: 2; }
.g { stroke: #6cc024; stroke-width: 2; }
.b { stroke: #5d93d8; stroke-width: 2; }
.r { stroke: #e01515; stroke-width: 2.4; }
.dot { fill: #ee2020; stroke: #5b0808; }
.cy { fill: #1fcdd0; stroke: #04393b; }

.combo { display: flex; align-items: center; width: 246px; height: 27px; margin: 8px 12px 0 11px; padding: 0 3px 0 12px; background: #fff; border-radius: 7px; box-shadow: 0 1px 1px #0004; }
.combo > svg { width: 21px; height: 20px; }
.combo select { flex: 1; appearance: none; padding-left: 5px; height: 26px; outline: 0; }
.stepper { width: 21px; height: 21px; border-radius: 5px; background: #0a7bff; }
.stepper svg { display: block; width: 21px; height: 21px; }

main { display: flex; flex: 1; }
aside { width: 632px; flex: none; border-right: 2px solid #999; background: #ebebeb; }
.view { flex: 1; min-width: 0; display: block; }
.front { font: 24px Inter, sans-serif; text-anchor: middle; fill: #7c7ca8; }
.axis { font: 24px "Liberation Sans", sans-serif; fill: #111; }

.tabs { display: flex; height: 28px; padding-top: 1px; }
.tabs::before, .tabs::after { content: ""; flex: 1; margin: 13px 4px 0 0; background: #e2e2e2; }
.tabs::after { margin: 13px 0 0 4px; }
.tabs button { width: 79px; background: #fff; border-radius: 7px 0 0 7px; box-shadow: 0 1px 1px #0003; }
.tabs .on { display: flex; align-items: center; width: 135px; padding-left: 16px; gap: 10px; color: #fff; background: linear-gradient(#2a91ff, #0077ff); border-radius: 0 7px 7px 0; }
.tabs svg { width: 20px; height: 20px; }

.dock { display: flex; align-items: center; gap: 11px; height: 25px; padding: 0 1px 0 20px; }
.dock.tall { height: 27px; }
.dock h2 { flex: 1; font-weight: 400; text-align: center; }
.dock button { width: 21px; height: 21px; border: 1px solid #aaa; background: #f2f2f2; }
.dock svg { display: block; width: 19px; height: 19px; }

.tasks { display: flex; flex-direction: column; height: 248px; padding: 27px 0 0; background: #d8dde5; border: 2px solid #b2b2b2; border-left-color: #c4c4c4; }
.push { height: 27px; background: #fff; border-radius: 6px; box-shadow: 0 1px 1px #0004; }
.tasks > .push { width: 85px; align-self: center; }
.tasks a { display: flex; align-items: center; gap: 3px; height: 48px; padding-left: 18px; font-size: 14px; font-weight: 600; color: #8288ab; text-decoration: none; }
.tasks a.first { margin-top: 21px; }
.tasks a svg { width: 21px; height: 20px; }
.filters { display: flex; align-items: center; margin: 20px 0 0 51px; }
.flat { display: flex; align-items: center; justify-content: center; width: 38px; height: 34px; font-size: 14px; background: linear-gradient(#e2e2e2, #f6f6f6); border: 1px solid #aaa; }
.flat.wide { width: 399px; margin-left: 8px; }
.flat.eye { width: 35px; margin: 0 13px 0 12px; }
.flat svg { width: 20px; height: 20px; }
.filters .chev { margin-top: 22px; }

.check { appearance: none; display: grid; place-items: center; flex: none; width: 14px; height: 14px; border-radius: 3px; background: #fff; box-shadow: 0 0 1px #0008; }
.check.big { width: 19px; height: 19px; border-radius: 5px; }
.check:checked { background: #0a7bff; }
.check:checked::before { content: ""; width: 80%; height: 80%; background: #fff; clip-path: polygon(8% 50%, 22% 40%, 42% 65%, 76% 8%, 92% 18%, 46% 94%); }
.check:disabled { background: #f2f2f2; }

.clipping { display: flex; flex-direction: column; gap: 16px; padding: 7px 15px 3px 16px; }
.cap { display: flex; align-items: center; gap: 4px; height: 18px; padding-left: 10px; font-size: 15px; }
.box { padding: 20px 21px 20px 19px; border: 1px solid #dcdcdc; border-radius: 7px; background: #e4e4e4; }
.row { display: flex; align-items: center; height: 27px; }
.row label { width: 64px; }
.row .push { width: 67px; margin-left: auto; }
.disabled { color: #acacac; }
.disabled .push { background: #f1f1f1; box-shadow: 0 1px 1px #0002; }
.spin { display: flex; align-items: center; gap: 3px; }
.spin input { width: 140px; height: 24px; padding: 1px 0 0 2px; background: #fff; border-bottom: 1px solid #999; }
.disabled .spin input { border-color: #ccc; }
.spin > span { display: flex; flex-direction: column; width: 18px; height: 27px; border-radius: 7px; background: #fff; box-shadow: 0 0 1px 1px #0002; overflow: hidden; }
.disabled .spin > span { background: #f1f1f1; }
.spin button { flex: 1; display: grid; place-items: center; border-bottom: 1px solid #ddd; }
.spin svg { width: 10px; height: 8px; }
.custom .row { padding-left: 13px; }
.custom .row .push { width: 78px; }
.adjust { display: flex; align-items: center; gap: 5px; height: 18px; margin-top: 19px; }
.dir { height: 17px; margin: 6px 0 0 9px; font-size: 15px; line-height: 17px; }
.inner { display: flex; gap: 16px; padding: 20px 22px; border: 1px solid #d2d2d2; border-radius: 7px; background: #dcdcdc; }
```
